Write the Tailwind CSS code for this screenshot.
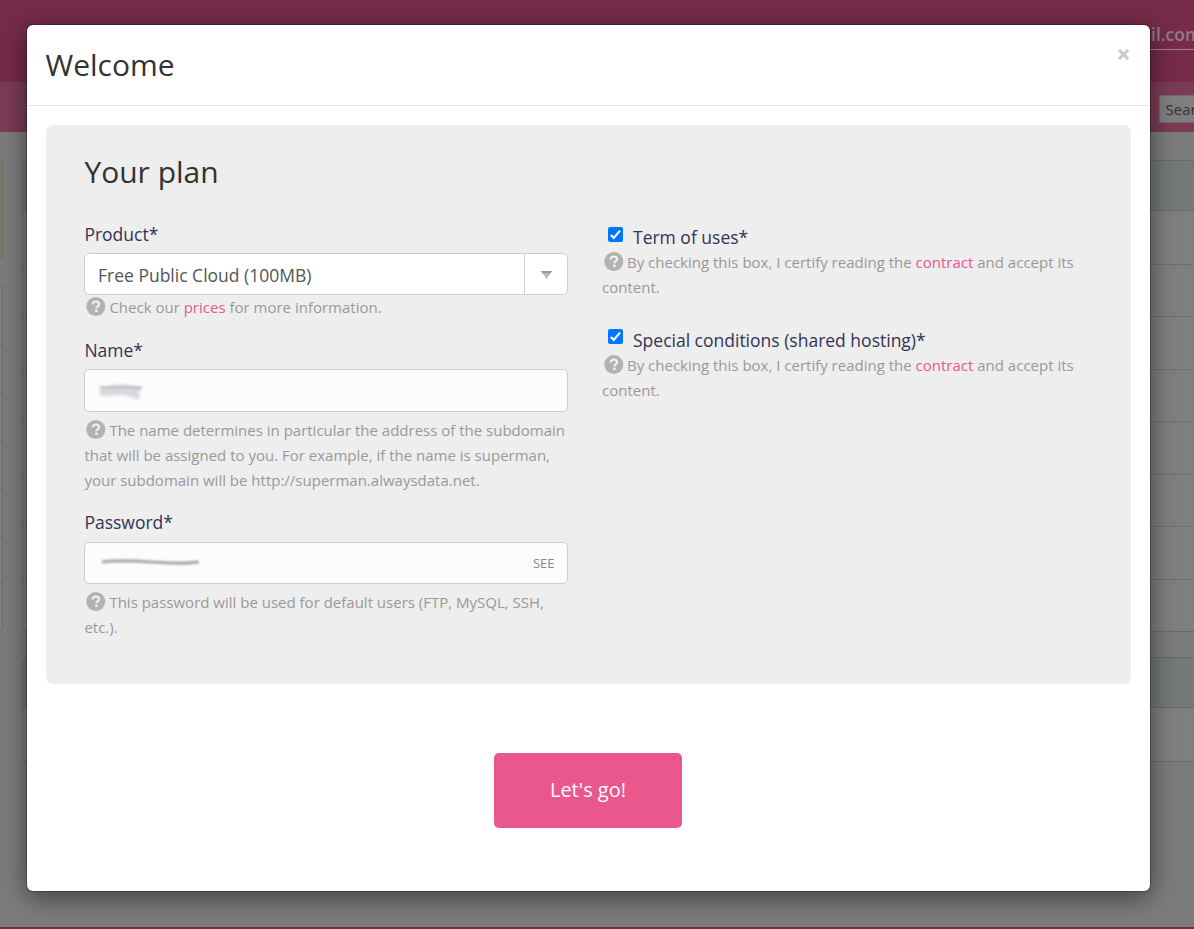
<!DOCTYPE html>
<html lang="en">
<head>
<meta charset="utf-8">
<title>Welcome</title>
<script src="https://cdn.jsdelivr.net/npm/@tailwindcss/browser@4"></script>
</head>
<body class="relative h-[929px] w-[1194px] overflow-hidden bg-[#7c7c7c] font-['Open_Sans','Noto_Sans',sans-serif]">
<svg class="hidden">
  <symbol id="help" viewBox="0 0 20 20"><circle cx="9.800" cy="10.500" r="9.500" fill="#b2b2b2"/><path d="M6.700 8.400C6.900 6.500 8.100 5.500 9.900 5.500c1.900 0 3.200 1 3.200 2.600 0 2.200-2.700 2.200-2.700 4.100" fill="none" stroke="#f2f2f2" stroke-width="2.200"/><rect x="9.100" y="13.600" width="2.500" height="2.400" rx=".6" fill="#f2f2f2"/></symbol>
</svg>

<!-- page behind the dialog -->
<div class="flex h-full flex-col">
  <header class="flex h-[82px] shrink-0 justify-end bg-[#762b48]">
    <div class="mt-[20px] h-[30px] w-[48px] overflow-hidden border-b border-[#a98292] pl-[5px] text-[17.5px] leading-[28px] font-semibold whitespace-nowrap text-[#8d7f85]">il.com</div>
  </header>
  <nav class="flex h-[50px] shrink-0 items-center justify-end bg-[#7b3b55]">
    <div class="mt-[4px] h-[28px] w-[35px] overflow-hidden rounded-l-[2px] border border-r-0 border-[#6c6c6c] bg-[#7f7f7f] pl-[5.500px] text-[15px] leading-[27px] whitespace-nowrap text-[#333]">Search</div>
  </nav>
  <div class="flex flex-1 gap-[19px] overflow-hidden pt-[28px]">
    <div class="flex w-[3px] shrink-0 flex-col gap-[25px]">
      <div class="h-[99px] rounded-r-[6px] border-y border-r border-[#6f6f69] bg-[#7e7b6c]"></div>
      <div class="h-[347px] divide-y divide-[#6a6a6a] rounded-r-[6px] border-y border-r border-[#6a6a6a] bg-[#7f7f7f]">
        <div class="h-[61px]"></div><div class="h-[48px]"></div><div class="h-[48px]"></div><div class="h-[47px]"></div><div class="h-[48px]"></div><div class="h-[47px]"></div><div></div>
      </div>
    </div>
    <div class="flex flex-1 flex-col gap-[25px]">
      <div class="h-[472px] overflow-hidden rounded-l-[6px] border border-r-0 border-[#6a6a6a] bg-[#7f7f7f]">
        <div class="h-[50px] border-b border-[#6a6a6a] bg-[#747876]"></div>
        <div class="h-[54px] border-b border-dotted border-[#5e5e5e]"></div>
        <div class="h-[52px] border-b border-dotted border-[#5e5e5e]"></div>
        <div class="h-[53px] border-b border-dotted border-[#5e5e5e]"></div>
        <div class="h-[52px] border-b border-dotted border-[#5e5e5e]"></div>
        <div class="h-[53px] border-b border-dotted border-[#5e5e5e]"></div>
        <div class="h-[52px] border-b border-dotted border-[#5e5e5e]"></div>
        <div class="h-[53px] border-b border-dotted border-[#5e5e5e]"></div>
      </div>
      <div class="h-[105px] overflow-hidden rounded-l-[6px] border border-r-0 border-[#6a6a6a] bg-[#7f7f7f]">
        <div class="h-[50px] border-b border-[#6a6a6a] bg-[#747876]"></div>
      </div>
    </div>
  </div>
  <footer class="h-[2px] shrink-0 bg-[#762b48]"></footer>
</div>

<!-- dialog -->
<div class="absolute top-[25px] left-[27px] flex h-[866px] w-[1123px] flex-col rounded-[6px] bg-white shadow-[0_6px_26px_rgba(0,0,0,0.52),0_0_0_1px_rgba(0,0,0,0.25)]">
  <div class="flex h-[81px] shrink-0 items-start justify-between border-b border-[#e5e5e5] pr-[20.500px] pl-[18.500px]">
    <h1 class="mt-[20px] text-[30px] leading-[40px] text-[#333]">Welcome</h1>
    <svg class="mt-[23px] size-[13px]" viewBox="0 0 13 13"><path d="M2 1.900l9.200 9.200M11.200 1.900l-9.200 9.200" stroke="#ccc" stroke-width="3"/></svg>
  </div>
  <section class="mx-[19px] mt-[19px] h-[559px] shrink-0 rounded-[7px] bg-[#eee] pt-[27px] pl-[38px]">
    <h2 class="pl-[0.400px] text-[30px] leading-[40px] text-[#333]">Your plan</h2>
    <div class="flex gap-[34px] text-[15px] leading-[25px] text-[#999]">
      <div class="w-[484px] pt-[30px]">
        <label class="block pl-[0.400px] text-[17.5px] leading-[24px] text-[#333355]">Product*</label>
        <div class="mt-[7px] flex h-[42px] rounded-[5px] border border-[#ccc] bg-white">
          <div class="flex-1 pl-[13px] text-[17.5px] leading-[42px] text-[#555]">Free Public Cloud (100MB)</div>
          <div class="flex w-[43px] items-center justify-center border-l border-[#ccc]">
            <svg class="mt-[2px] h-[8px] w-[11px]" viewBox="0 0 11 8"><path d="M0 0h11L5.500 8z" fill="#b9b9be"/><path d="M0 0h11l-1.400 2H1.400z" fill="#999"/></svg>
          </div>
        </div>
        <p class="pl-[0.400px] whitespace-nowrap"><svg class="mr-[3px] ml-[2px] inline-block size-[20px] align-[-3px]"><use href="#help"/></svg>Check our <a class="text-[#e9578d]">prices</a> for more information.</p>
        <label class="mt-[18px] block pl-[0.400px] text-[17.5px] leading-[24px] text-[#333355]">Name*</label>
        <div class="mt-[7px] h-[43px] rounded-[5px] border border-[#ccc] bg-[#fcfcfc] pt-[12px] pl-[12px]">
          <svg class="h-[20px] w-[52px]" viewBox="0 0 52 20"><defs><filter id="soft"><feGaussianBlur stdDeviation="1.700"/></filter><filter id="edge" x="-10%" y="-200%" width="120%" height="500%"><feGaussianBlur stdDeviation=".8"/></filter></defs><path d="M3 5L26 2l20 3-4 4 1 9-16-5-24 1z" fill="#d8d8dc" filter="url(#soft)"/><path d="M3 5.500Q24 4.800 45 5.900" fill="none" stroke="#a9a9b4" stroke-width="1.600" opacity=".8" filter="url(#edge)"/></svg>
        </div>
        <p class="mt-[6px] pl-[0.400px] whitespace-nowrap"><svg class="mr-[3px] ml-[2px] inline-block size-[20px] align-[-3px]"><use href="#help"/></svg>The name determines in particular the address of the subdomain<br>that will be assigned to you. For example, if the name is superman,<br>your subdomain will be http://superman.alwaysdata.net.</p>
        <label class="mt-[17px] block pl-[0.400px] text-[17.5px] leading-[24px] text-[#333355]">Password*</label>
        <div class="mt-[8px] flex h-[42px] items-center justify-between rounded-[5px] border border-[#ccc] bg-[#fcfcfc] pr-[12.500px] pl-[15px] text-[13px]">
          <svg class="h-[12px] w-[104px]" viewBox="0 0 104 12"><defs><filter id="soft2" x="-5%" y="-200%" width="110%" height="500%"><feGaussianBlur stdDeviation=".8"/></filter></defs><path d="M2 4.800Q22 2.800 52 5T99 4.800" fill="none" stroke="#a9a7b2" stroke-width="3.200" filter="url(#soft2)"/></svg>
          <span class="text-[#888]">SEE</span>
        </div>
        <p class="mt-[6px] pl-[0.400px] whitespace-nowrap"><svg class="mr-[3px] ml-[2px] inline-block size-[20px] align-[-3px]"><use href="#help"/></svg>This password will be used for default users (FTP, MySQL, SSH,<br>etc.).</p>
      </div>
      <div class="w-[484px] pt-[33px]">
        <div class="flex pl-[6px]">
          <svg class="mt-[2px] mr-[10px] size-[15px]" viewBox="0 0 15 15"><rect width="15" height="15" rx="2" fill="#0075ff"/><path d="M2.900 8l2.900 2.900L12 3.600" fill="none" stroke="#fff" stroke-width="2.200"/></svg>
          <label class="text-[17.5px] leading-[24px] text-[#333355]">Term of uses*</label>
        </div>
        <p class="mt-[1px] whitespace-nowrap"><svg class="mr-[3px] ml-[2px] inline-block size-[20px] align-[-3px]"><use href="#help"/></svg>By checking this box, I certify reading the <a class="text-[#e9578d]">contract</a> and accept its<br>content.</p>
        <div class="mt-[28px] flex pl-[6px]">
          <svg class="mt-[1px] mr-[10px] size-[15px]" viewBox="0 0 15 15"><rect width="15" height="15" rx="2" fill="#0075ff"/><path d="M2.900 8l2.900 2.900L12 3.600" fill="none" stroke="#fff" stroke-width="2.200"/></svg>
          <label class="text-[17.5px] leading-[24px] text-[#333355]">Special conditions (shared hosting)*</label>
        </div>
        <p class="mt-[1px] whitespace-nowrap"><svg class="mr-[3px] ml-[2px] inline-block size-[20px] align-[-3px]"><use href="#help"/></svg>By checking this box, I certify reading the <a class="text-[#e9578d]">contract</a> and accept its<br>content.</p>
      </div>
    </div>
  </section>
  <button class="mt-[69px] ml-[467px] h-[75px] w-[188px] shrink-0 rounded-[5px] bg-[#e9578d] pb-[2px] text-[20px] text-white">Let's go!</button>
</div>
</body>
</html>
